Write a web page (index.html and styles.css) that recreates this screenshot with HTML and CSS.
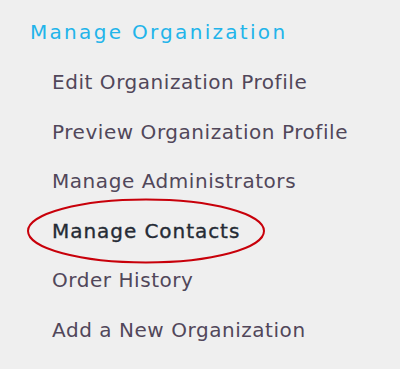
FILE: index.html
```html
<!DOCTYPE html>
<html>
<head>
<meta charset="utf-8">
<link rel="stylesheet" href="styles.css">
</head>
<body>
<div class="menu">
  <h2 class="menu-title">Manage Organization</h2>
  <ul class="menu-list">
    <li class="menu-item">Edit Organization Profile</li>
    <li class="menu-item">Preview Organization Profile</li>
    <li class="menu-item">Manage Administrators</li>
    <li class="menu-item active">Manage Contacts
      <svg class="circle" width="240" height="66" viewBox="0 0 240 66"><ellipse cx="120" cy="33" rx="118" ry="31.5" fill="none" stroke="#c8000a" stroke-width="2"/></svg>
    </li>
    <li class="menu-item">Order History</li>
    <li class="menu-item">Add a New Organization</li>
  </ul>
</div>
</body>
</html>
```
FILE: styles.css
```css
html, body {
  margin: 0;
  padding: 0;
  background: #efefef;
}
body {
  width: 400px;
  height: 369px;
  overflow: hidden;
  font-family: "DejaVu Sans", sans-serif;
}
.menu {
  padding-top: 18px;
}
.menu-title {
  margin: 0 0 0 30px;
  font-size: 20px;
  font-weight: normal;
  color: #22b4ea;
  letter-spacing: 2.3px;
  line-height: 28px;
}
.menu-list {
  list-style: none;
  margin: 22px 0 0 0;
  padding: 0 0 0 52px;
}
.menu-item {
  position: relative;
  font-size: 20px;
  line-height: 28px;
  height: 28px;
  margin-bottom: 21.6px;
  color: #51475a;
  font-weight: normal;
  letter-spacing: 0.55px;
}
.menu-item.active {
  color: #252b35;
  letter-spacing: 0.95px;
  -webkit-text-stroke: 0.35px #252b35;
}
.circle {
  position: absolute;
  left: -26px;
  top: -19px;
}
```
